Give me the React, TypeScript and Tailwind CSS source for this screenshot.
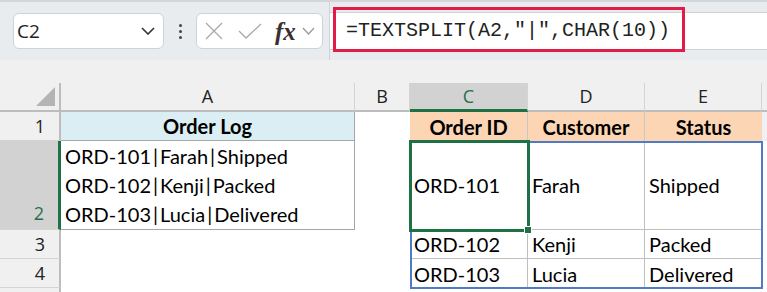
import React from "react";

const cellFont = { fontFamily: "Lato, 'Open Sans', sans-serif" };

const ColHead = ({ label, active }: { label: string; active?: boolean }) => (
  <div
    className={`flex items-center justify-center border-r border-[#d4d4d4] text-[18px] ${
      active
        ? "bg-[#d2d2d2] text-[#1e7145] border-b-[3px] border-b-[#1e7145]"
        : "bg-[#f0f0f0] text-[#222] border-b-2 border-b-[#bdbdbd]"
    }`}
    style={{ fontFamily: "'Open Sans', 'Noto Sans', sans-serif" }}
  >
    {label}
  </div>
);

const RowHead = ({ n, active, tall }: { n: number; active?: boolean; tall?: boolean }) => (
  <div
    className={`flex ${tall ? "items-end pb-[2px]" : "items-center"} justify-end pr-[14px] border-b border-[#d4d4d4] text-[18px] ${
      active
        ? "bg-[#d2d2d2] text-[#1e7145] border-r-[3px] border-r-[#1e7145]"
        : "bg-[#f0f0f0] text-[#222] border-r-2 border-r-[#bdbdbd]"
    }`}
    style={{ fontFamily: "'Open Sans', 'Noto Sans', sans-serif" }}
  >
    {n}
  </div>
);

const Cell = ({
  children,
  className = "",
}: {
  children?: React.ReactNode;
  className?: string;
}) => (
  <div className={`flex items-center px-[4px] text-[20px] text-black ${className}`} style={cellFont}>
    {children}
  </div>
);

const Pipe = () => <span className="mx-[2px]">|</span>;

const LogLine = ({ parts }: { parts: string[] }) => (
  <span className="flex">
    {parts[0]}
    <Pipe />
    {parts[1]}
    <Pipe />
    {parts[2]}
  </span>
);

export default function App() {
  return (
    <div className="w-[767px] h-[292px] overflow-hidden bg-white relative">
      {/* TOOLBAR */}
      <div className="h-[60px] bg-[#e9ecef] border-t-2 border-[#d3d6d9] flex items-center relative">
        <div className="ml-[13px] w-[151px] h-[36px] bg-white border border-[#d0d3d6] rounded-[6px] flex items-center justify-between pl-[3px] pr-[8px]">
          <span className="text-[19px] text-[#222]" style={{ fontFamily: "'Open Sans', sans-serif" }}>
            C2
          </span>
          <svg width="14" height="8" viewBox="0 0 14 8" fill="none" stroke="#333" strokeWidth="1.6">
            <path d="M1 1 L7 7 L13 1" />
          </svg>
        </div>
        <div className="w-[32px] flex flex-col items-center gap-[3px]">
          <span className="w-[3px] h-[3px] bg-[#444] rounded-full" />
          <span className="w-[3px] h-[3px] bg-[#444] rounded-full" />
          <span className="w-[3px] h-[3px] bg-[#444] rounded-full" />
        </div>
        <div className="w-[127px] h-[36px] bg-white border border-[#d0d3d6] rounded-[6px] flex items-center pl-[8px]">
          <svg width="18" height="18" viewBox="0 0 18 18" stroke="#a8a8a8" strokeWidth="1.3">
            <path d="M1 1 L17 17 M17 1 L1 17" />
          </svg>
          <svg className="ml-[15px]" width="24" height="16" viewBox="0 0 24 16" fill="none" stroke="#a8a8a8" strokeWidth="1.3">
            <path d="M1 8 L8 15 L23 1" />
          </svg>
          <span
            className="ml-[13px] text-[25px] italic font-bold text-[#3a3030] leading-none"
            style={{ fontFamily: "'Liberation Serif', serif" }}
          >
            fx
          </span>
          <svg className="ml-[6px]" width="13" height="8" viewBox="0 0 13 8" fill="none" stroke="#999" strokeWidth="1.3">
            <path d="M1 1 L6.5 7 L12 1" />
          </svg>
        </div>
        <div className="ml-[6px] self-stretch border-l border-[#d0d3d6] flex-1 flex items-center">
          <div className="w-full h-[38px] bg-white border-y border-[#d0d3d6] flex items-center pl-[16px]">
            <span className="text-[20px] text-[#222]" style={{ fontFamily: "'Liberation Mono', 'DejaVu Sans Mono', monospace" }}>
              =TEXTSPLIT(A2,"|",CHAR(10))
            </span>
          </div>
        </div>
        {/* annotation box */}
        <div className="absolute left-[333px] top-[5px] w-[352px] h-[45px] border-[3px] border-[#e21b47]" />
      </div>

      <div className="h-[23px] bg-[#f0f0f0]" />

      {/* GRID */}
      <div className="relative grid grid-cols-[61px_294px_55px_118px_117px_117px_5px] grid-rows-[29px_29px_89px_29px_29px_4px]">
        {/* header row */}
        <div className="bg-[#f0f0f0] border-r-2 border-r-[#bdbdbd] border-b-2 border-b-[#bdbdbd] relative">
          <div className="absolute right-[4px] bottom-[4px] w-0 h-0 border-l-[19px] border-l-transparent border-b-[19px] border-b-[#b4b4b4]" />
        </div>
        <ColHead label="A" />
        <ColHead label="B" />
        <ColHead label="C" active />
        <ColHead label="D" />
        <ColHead label="E" />
        <div className="bg-[#f0f0f0] border-b-2 border-b-[#bdbdbd]" />

        {/* row 1 */}
        <RowHead n={1} />
        <Cell className="justify-center font-bold bg-[#daeef3] border-r border-b border-[#a6a6a6]">Order Log</Cell>
        <Cell />
        <Cell className="justify-center font-bold bg-[#fcd5b4] border-r border-[#c8c8c8]">Order ID</Cell>
        <Cell className="justify-center font-bold bg-[#fcd5b4] border-r border-[#c8c8c8]">Customer</Cell>
        <Cell className="justify-center font-bold bg-[#fcd5b4]">Status</Cell>
        <div className="bg-[#f0f0f0]" />

        {/* row 2 */}
        <RowHead n={2} active tall />
        <div className="flex flex-col justify-center px-[4px] text-[20px] leading-[29px] border-r border-b border-[#a6a6a6]" style={cellFont}>
          <LogLine parts={["ORD-101", "Farah", "Shipped"]} />
          <LogLine parts={["ORD-102", "Kenji", "Packed"]} />
          <LogLine parts={["ORD-103", "Lucia", "Delivered"]} />
        </div>
        <Cell />
        <Cell className="border-r border-b border-[#bfbfbf]">ORD-101</Cell>
        <Cell className="border-r border-b border-[#bfbfbf]">Farah</Cell>
        <Cell className="border-b border-[#bfbfbf]">Shipped</Cell>
        <div className="bg-white" />

        {/* row 3 */}
        <RowHead n={3} />
        <Cell />
        <Cell />
        <Cell className="border-r border-b border-[#bfbfbf]">ORD-102</Cell>
        <Cell className="border-r border-b border-[#bfbfbf]">Kenji</Cell>
        <Cell className="border-b border-[#bfbfbf]">Packed</Cell>
        <div />

        {/* row 4 */}
        <RowHead n={4} />
        <Cell />
        <Cell />
        <Cell className="border-r border-[#bfbfbf]">ORD-103</Cell>
        <Cell className="border-r border-[#bfbfbf]">Lucia</Cell>
        <Cell>Delivered</Cell>
        <div />

        {/* row 5 */}
        <div className="bg-[#f0f0f0] border-r-2 border-r-[#bdbdbd]" />
        <div className="col-span-6" />

        {/* spill range outline C2:E4 */}
        <div className="absolute left-[410px] top-[58px] w-[353px] h-[148px] border-2 border-[#4f7ac7] pointer-events-none" />
        {/* active cell C2 */}
        <div className="absolute left-[409px] top-[57px] w-[121px] h-[92px] border-[3px] border-[#1e7145] pointer-events-none" />
        <div className="absolute left-[524px] top-[143px] w-[8px] h-[8px] bg-[#1e7145] border border-white pointer-events-none" />
      </div>
    </div>
  );
}
